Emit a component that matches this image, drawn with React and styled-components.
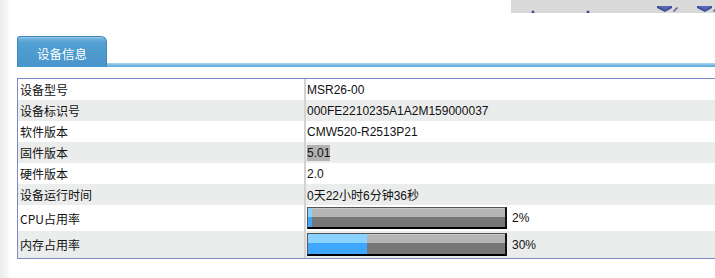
import React from "react";
import styled, { createGlobalStyle } from "styled-components";

const GlobalStyle = createGlobalStyle`
  html, body {
    margin: 0;
    padding: 0;
    background: #ffffff;
    overflow: hidden;
  }
  body {
    font-family: "Liberation Sans", "Noto Sans CJK SC", sans-serif;
    font-size: 12px;
    color: #111;
  }
`;

const Page = styled.div`
  display: flex;
  width: 715px;
  height: 278px;
  overflow: hidden;
`;

const SideStrip = styled.div`
  flex: 0 0 10px;
  background: linear-gradient(to right, #ececec, #f6f6f6 70%, #ffffff);
`;

const Main = styled.div`
  flex: 1 0 auto;
  display: flex;
  flex-direction: column;
  padding-left: 7px;
  min-width: 780px;
`;

const TopBar = styled.div`
  display: flex;
  justify-content: flex-start;
  height: 13px;
  padding-left: 494px;
`;

const ToolBox = styled.div`
  width: 220px;
  height: 13px;
  background: #d9d9d9;
  position: relative;
  overflow: hidden;
`;

const ToolIcon = styled.svg`
  position: absolute;
  bottom: 0;
`;

const TabRow = styled.div`
  display: flex;
  align-items: flex-end;
  margin-top: 23px;
  height: 31px;
`;

const Tab = styled.div`
  box-sizing: border-box;
  width: 90px;
  height: 31px;
  border: 1px solid #3f88bd;
  border-bottom: none;
  border-radius: 3px 6px 0 0;
  background: linear-gradient(#9ccbea 0, #6cb0dc 2px, #529fd3 6px, #4895cc 100%);
  color: #ffffff;
  font-family: "Noto Sans CJK SC", "Liberation Sans", sans-serif;
  font-size: 12.5px;
  display: flex;
  align-items: center;
  justify-content: center;
  padding-top: 2px;
`;

const TabLine = styled.div`
  flex: 1;
  height: 4px;
  background: linear-gradient(#a9d4ee, #7fbde3 50%, #58a7d9);
`;

const Table = styled.div`
  margin-top: 11px;
  border: 1px solid #7d89c5;
  border-right: none;
`;

const Row = styled.div`
  display: flex;
  height: ${(p) => p.$h}px;
  background: ${(p) => (p.$alt ? "#ebecec" : "#ffffff")};
`;

const Label = styled.div`
  box-sizing: border-box;
  width: 286px;
  padding-left: 2px;
  display: flex;
  align-items: center;
  font-family: "Noto Sans CJK SC", "Liberation Sans", sans-serif;
  font-size: 12px;
`;

const Value = styled.div`
  flex: 1;
  display: flex;
  align-items: center;
  gap: 5px;
  padding-left: 1px;
  border-left: 2px solid #d2d2d2;
  font-family: "Liberation Sans", "Noto Sans CJK SC", sans-serif;
  font-size: 12px;
`;

const Selected = styled.span`
  background: #b2b2b2;
  padding: 1px 0;
`;

const Bar = styled.div`
  box-sizing: border-box;
  width: 200px;
  height: ${(p) => p.$h}px;
  border: 1px solid #555;
  border-right: 2px solid #111;
  border-bottom: 2px solid #000;
  background: linear-gradient(#c9c9c9 0, #c9c9c9 1px, #b5b5b5 1px, #b5b5b5 45%, #767676 45%, #767676 100%);
  display: flex;
`;

const Fill = styled.div`
  height: 100%;
  background: linear-gradient(#8ad2ff 0, #8ad2ff 45%, #3ea6fc 45%, #3ea6fc 100%);
`;

const rows = [
  { label: "设备型号", value: "MSR26-00" },
  { label: "设备标识号", value: "000FE2210235A1A2M159000037" },
  { label: "软件版本", value: "CMW520-R2513P21" },
  { label: "固件版本", value: "5.01", selected: true },
  { label: "硬件版本", value: "2.0" },
  { label: "设备运行时间", value: "0天22小时6分钟36秒" },
];

const usage = [
  { label: "CPU占用率", pct: 2, h: 26, bar: 22 },
  { label: "内存占用率", pct: 30, h: 27, bar: 23 },
];

const Cube = ({ left }) => (
  <ToolIcon width="22" height="7" viewBox="0 0 22 7" style={{ left }}>
    <path d="M0 0 L0 2 L8 6 L15 2 L15 0 Z" fill="#3d4f9a" />
    <path d="M1 0 L8 4 L14 0 Z" fill="#5868b4" />
    <path d="M16 5 L20 1 L21 2 L17 6 Z" fill="#4a5aa8" />
  </ToolIcon>
);

export default function App() {
  return (
    <>
      <GlobalStyle />
      <Page>
        <SideStrip />
        <Main>
          <TopBar>
            <ToolBox>
              <ToolIcon width="4" height="3" viewBox="0 0 4 3" style={{ left: 20 }}>
                <circle cx="2" cy="2" r="1.5" fill="#3d4f9a" />
              </ToolIcon>
              <ToolIcon width="4" height="3" viewBox="0 0 4 3" style={{ left: 75 }}>
                <circle cx="2" cy="2" r="1.5" fill="#3d4f9a" />
              </ToolIcon>
              <Cube left={146} />
              <Cube left={186} />
            </ToolBox>
          </TopBar>

          <TabRow>
            <Tab>设备信息</Tab>
            <TabLine />
          </TabRow>

          <Table>
            {rows.map((r, i) => (
              <Row key={r.label} $h={21} $alt={i % 2 === 1}>
                <Label>{r.label}</Label>
                <Value>{r.selected ? <Selected>{r.value}</Selected> : r.value}</Value>
              </Row>
            ))}
            {usage.map((u, i) => (
              <Row key={u.label} $h={u.h} $alt={i % 2 === 1}>
                <Label>{u.label}</Label>
                <Value>
                  <Bar $h={u.bar}>
                    <Fill style={{ width: `${u.pct}%` }} />
                  </Bar>
                  <span>{u.pct}%</span>
                </Value>
              </Row>
            ))}
          </Table>
        </Main>
      </Page>
    </>
  );
}
